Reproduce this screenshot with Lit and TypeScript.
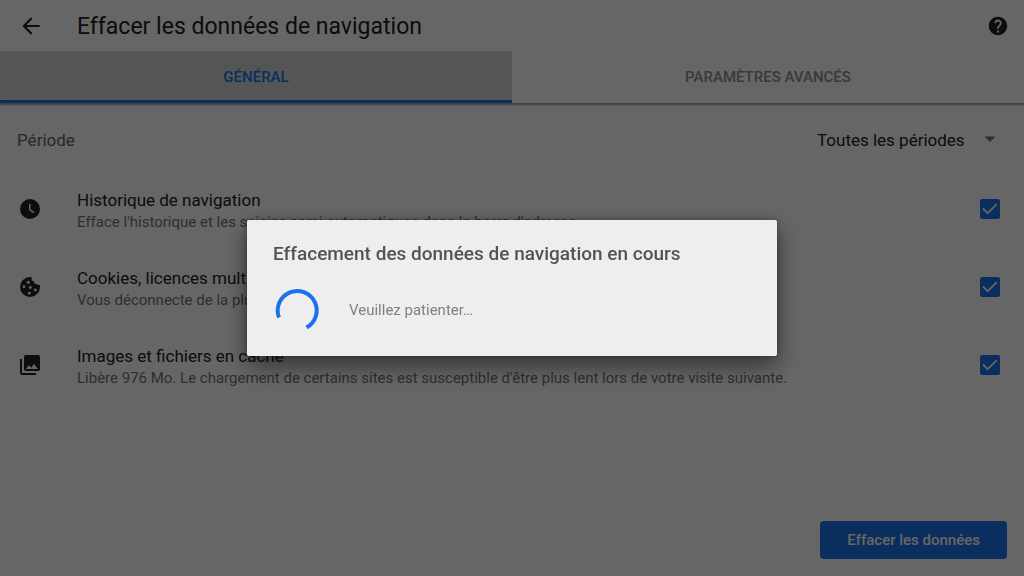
import { LitElement, html, css, svg, TemplateResult } from "lit";
import { customElement } from "lit/decorators.js";

interface DataType {
  id: string;
  icon: TemplateResult;
  title: string;
  summary: string;
}

const clockIcon = svg`<path fill-rule="evenodd" d="M12 2a10 10 0 1 0 0 20 10 10 0 0 0 0-20Zm-1 5h1.500v5.400l4.100 2.500-.8 1.300L11 13.200Z"/>`;

const cookieIcon = svg`
  <path d="M12 2a10 10 0 1 0 10 10c0-.7-.1-1.500-.3-2.200-1 .4-2.300.2-2.900-.8-1.700.4-3.200-1-2.900-2.700-1.800.2-2.900-1.700-2.100-3.200C13.800 2.200 12.900 2 12 2Z"/>
  <g class="chips">
    <circle cx="10.300" cy="7.200" r="1.500"/><circle cx="6" cy="11.700" r="1.400"/>
    <circle cx="12.300" cy="12.500" r="1.400"/><circle cx="17.300" cy="14.900" r="1.400"/>
    <circle cx="11.300" cy="18" r="1.500"/>
  </g>`;

const photosIcon = svg`<path d="M22 16V4c0-1.100-.9-2-2-2H8c-1.100 0-2 .9-2 2v12c0 1.100.9 2 2 2h12c1.100 0 2-.9 2-2Zm-11-4 2.030 2.710L16 11l4 5H8l3-4ZM2 6v14c0 1.100.9 2 2 2h14v-2H4V6H2Z"/>`;

const dataTypes: DataType[] = [
  {
    id: "history",
    icon: clockIcon,
    title: "Historique de navigation",
    summary: "Efface l'historique et les saisies semi-automatiques dans la barre d'adresse.",
  },
  {
    id: "cookies",
    icon: cookieIcon,
    title: "Cookies, licences multimédias",
    summary: "Vous déconnecte de la plupart des sites.",
  },
  {
    id: "cache",
    icon: photosIcon,
    title: "Images et fichiers en cache",
    summary:
      "Libère 976 Mo. Le chargement de certains sites est susceptible d'être plus lent lors de votre visite suivante.",
  },
];

@customElement("app-root")
export class AppRoot extends LitElement {
  static styles = css`
    :host {
      display: block;
      font-family: Roboto, sans-serif;
      color: #202124;
    }
    * {
      box-sizing: border-box;
    }
    button,
    select {
      font: inherit;
      border: 0;
      background: none;
      padding: 0;
      margin: 0;
    }
    h1,
    h2,
    p {
      margin: 0;
      font-weight: 400;
    }
    svg {
      display: block;
      fill: currentColor;
    }
    .page {
      display: flex;
      flex-direction: column;
      min-height: 100vh;
      background: #fff;
    }
    .toolbar {
      display: flex;
      align-items: center;
      height: 51px;
      padding: 0 15px 0 18px;
    }
    .icon-button {
      color: inherit;
    }
    .heading {
      flex: 1;
      padding: 2px 0 0 33px;
      font-size: 23px;
      line-height: 28px;
    }
    .tabs {
      display: flex;
      height: 52px;
      box-shadow: 0 2px 2px rgba(0, 0, 0, 0.4);
    }
    .tab {
      flex: 1;
      padding-top: 3px;
      border-bottom: 3px solid transparent;
      color: #8f8f8f;
      font-size: 15px;
      font-weight: 500;
      text-transform: uppercase;
    }
    .tab.selected {
      color: #1a73e8;
      background: #d0d6d4;
      border-color: #1a73e8;
    }
    .period {
      display: flex;
      align-items: center;
      justify-content: space-between;
      padding: 25px 28px 0 17px;
      font-size: 17px;
      line-height: 24px;
    }
    .period-label {
      color: #5f6368;
    }
    .select-wrap {
      display: grid;
      align-items: center;
    }
    .select-wrap > * {
      grid-area: 1 / 1;
    }
    .select-wrap svg {
      justify-self: end;
      pointer-events: none;
      color: #757575;
    }
    .period-select {
      appearance: none;
      color: #202124;
      padding-right: 31px;
    }
    .list {
      display: flex;
      flex-direction: column;
      padding: 18px 24px 0 18px;
    }
    .row {
      display: grid;
      grid-template-columns: 24px 1fr 20px;
      column-gap: 35px;
      align-items: center;
      height: 78px;
    }
    .row-text {
      padding-top: 4px;
    }
    .chips {
      fill: #fff;
    }
    .row-title {
      font-size: 17px;
      line-height: 22px;
    }
    .row-summary {
      color: #757575;
      font-size: 15px;
      line-height: 22px;
    }
    .check {
      display: grid;
    }
    .check > * {
      grid-area: 1 / 1;
    }
    .check svg {
      pointer-events: none;
      fill: none;
      stroke: #fff;
      stroke-width: 1.800;
    }
    .check input {
      appearance: none;
      width: 20px;
      height: 20px;
      margin: 0;
      border-radius: 2px;
      border: 2px solid #757575;
    }
    .check input:checked {
      background: #1a73e8;
      border-color: #1a73e8;
    }
    .actions {
      display: flex;
      justify-content: flex-end;
      margin-top: auto;
      padding: 17px;
    }
    .primary {
      height: 38px;
      padding: 0 27px;
      border-radius: 4px;
      background: #1a73e8;
      color: #fff;
      font-size: 15px;
      font-weight: 500;
    }
    .scrim {
      position: fixed;
      inset: 0;
      display: grid;
      place-items: center;
      background: rgba(0, 0, 0, 0.6);
    }
    .dialog {
      width: 530px;
      max-width: 90vw;
      padding: 20px 26px 21px;
      border-radius: 2px;
      background: #eee;
      box-shadow: 0 10px 24px rgba(0, 0, 0, 0.5), 0 0 6px rgba(0, 0, 0, 0.3);
    }
    .dialog-title {
      color: #535353;
      font-size: 19px;
      line-height: 28px;
      font-weight: 500;
    }
    .progress {
      display: flex;
      align-items: center;
      gap: 26px;
      padding-top: 17px;
      color: #808080;
      font-size: 15px;
      line-height: 20px;
    }
    .spinner {
      fill: none;
      stroke: #1a73e8;
      stroke-width: 4;
    }
  `;

  render() {
    return html`
      <main class="page">
        <header class="toolbar">
          <button class="icon-button" aria-label="Retour">
            <svg width="26" height="26" viewBox="0 0 24 24">
              <path d="M20 11H7.830l5.590-5.590L12 4l-8 8 8 8 1.410-1.410L7.830 13H20v-2Z" />
            </svg>
          </button>
          <h1 class="heading">Effacer les données de navigation</h1>
          <button class="icon-button" aria-label="Aide">
            <svg width="22" height="22" viewBox="0 0 24 24">
              <path
                d="M12 2C6.480 2 2 6.480 2 12s4.480 10 10 10 10-4.480 10-10S17.520 2 12 2Zm1 17h-2v-2h2v2Zm2.070-7.750-.9.920C13.450 12.900 13 13.500 13 15h-2v-.5c0-1.100.45-2.100 1.170-2.830l1.240-1.260c.37-.36.59-.86.59-1.410 0-1.100-.9-2-2-2s-2 .9-2 2H8c0-2.210 1.790-4 4-4s4 1.790 4 4c0 .88-.36 1.680-.93 2.250Z"
              />
            </svg>
          </button>
        </header>
        <div class="tabs" role="tablist">
          <button class="tab selected" role="tab" aria-selected="true">Général</button>
          <button class="tab" role="tab" aria-selected="false">Paramètres avancés</button>
        </div>
        <div class="period">
          <label class="period-label" for="period">Période</label>
          <span class="select-wrap">
            <select class="period-select" id="period">
              <option>Toutes les périodes</option>
            </select>
            <svg width="12" height="8" viewBox="0 0 12 8"><path d="M0.500 0.500h11L6 6Z" /></svg>
          </span>
        </div>
        <section class="list">
          ${dataTypes.map(
            (item) => html`
              <div class="row">
                <svg width="24" height="24" viewBox="0 0 24 24">${item.icon}</svg>
                <label class="row-text" for=${item.id}>
                  <p class="row-title">${item.title}</p>
                  <p class="row-summary">${item.summary}</p>
                </label>
                <span class="check">
                  <input type="checkbox" id=${item.id} checked />
                  <svg width="20" height="20" viewBox="0 0 20 20"><path d="M3 9.500l4.700 4.700 9.100-9.100" /></svg>
                </span>
              </div>
            `
          )}
        </section>
        <footer class="actions">
          <button class="primary">Effacer les données</button>
        </footer>
      </main>
      <div class="scrim">
        <div class="dialog" role="dialog" aria-modal="true" aria-labelledby="dialog-title">
          <h2 class="dialog-title" id="dialog-title">Effacement des données de navigation en cours</h2>
          <div class="progress">
            <svg class="spinner" width="50" height="50" viewBox="0 0 50 50" aria-hidden="true">
              <path d="M6 32.500A19.500 19.500 0 1 1 33.500 42.600" />
            </svg>
            <p>Veuillez patienter…</p>
          </div>
        </div>
      </div>
    `;
  }
}
